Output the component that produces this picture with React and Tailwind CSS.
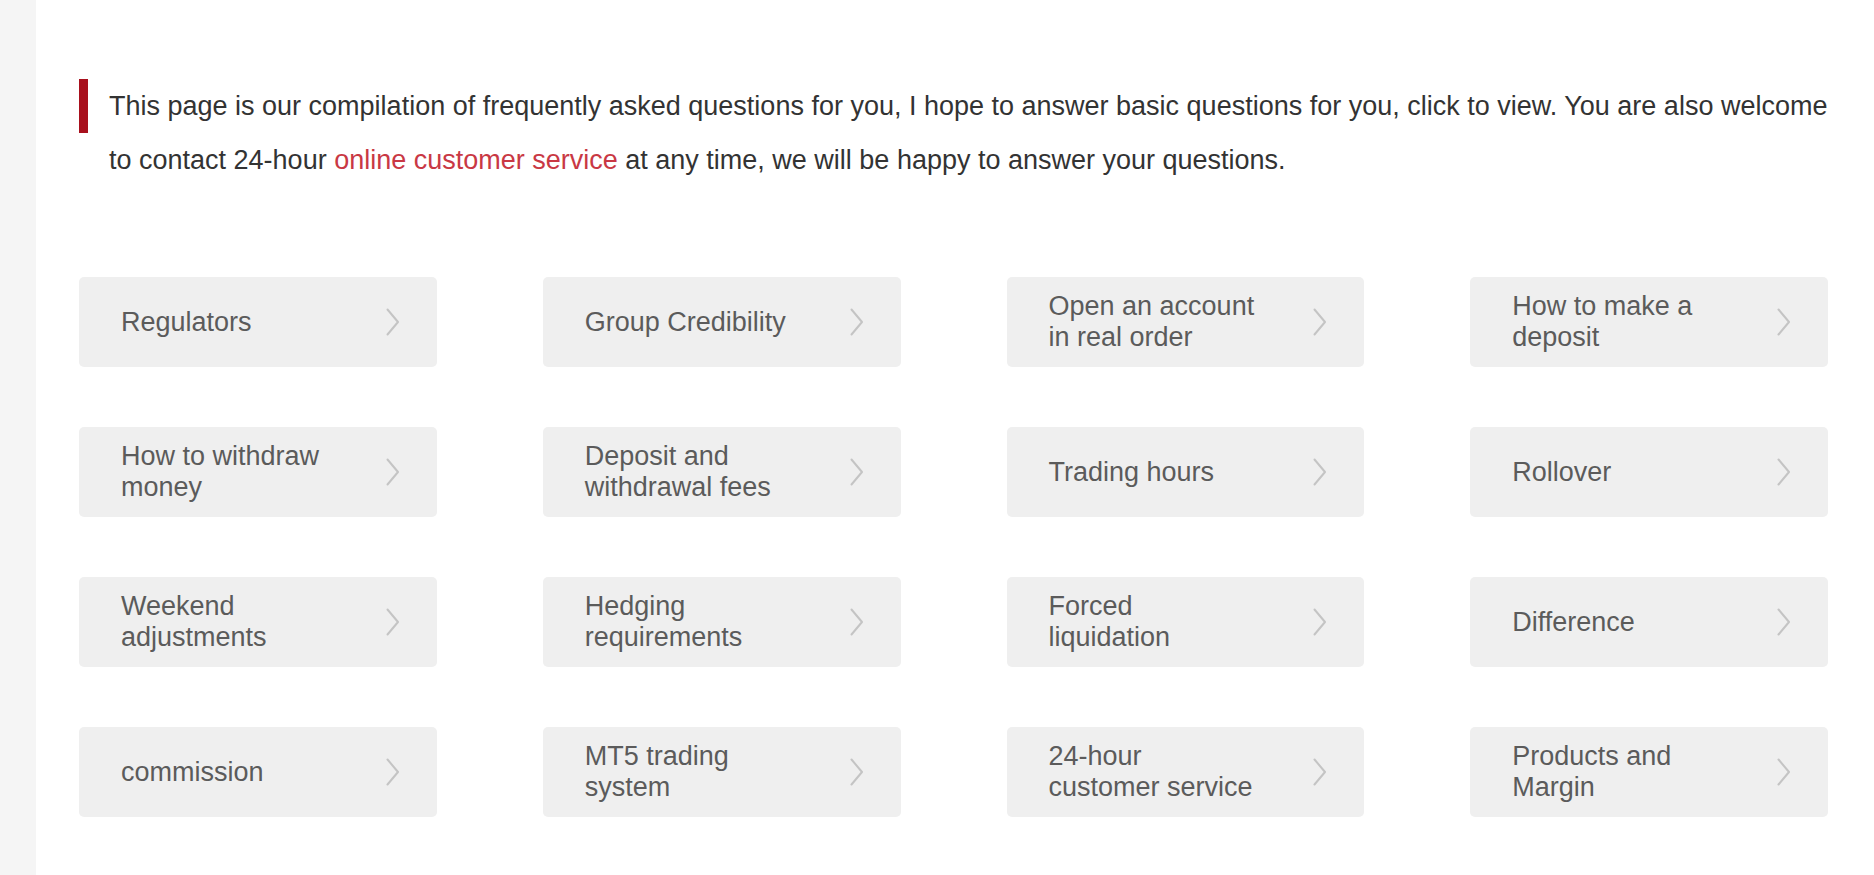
import React from 'react';

const topics = [
  'Regulators',
  'Group Credibility',
  'Open an account in real order',
  'How to make a deposit',
  'How to withdraw money',
  'Deposit and withdrawal fees',
  'Trading hours',
  'Rollover',
  'Weekend adjustments',
  'Hedging requirements',
  'Forced liquidation',
  'Difference',
  'commission',
  'MT5 trading system',
  '24-hour customer service',
  'Products and Margin',
];

function Chevron() {
  return (
    <svg width="16" height="30" viewBox="0 0 16 30" fill="none" className="shrink-0">
      <path d="M2.5 2.5 L13 15 L2.5 27.5" stroke="#c4c4c4" strokeWidth="2" strokeLinecap="round" strokeLinejoin="round" />
    </svg>
  );
}

function TopicCard({ title }) {
  return (
    <a
      href="#"
      className="flex h-[90px] items-center justify-between rounded-[5px] bg-[#efefef] pl-[42px] pr-[36px]"
    >
      <span className="w-[209px] text-[27px] leading-[31px] text-[#5b5b5b]">{title}</span>
      <Chevron />
    </a>
  );
}

export default function App() {
  return (
    <div className="flex min-h-[875px] bg-white font-['Liberation_Sans',Arial,sans-serif]">
      <div className="w-[36px] shrink-0 bg-[#f5f5f5]" />
      <main className="flex-1 pl-[43px] pr-[46px] pt-[79px] pb-[59px]">
        <div className="flex items-start">
          <div className="h-[54px] w-[9px] shrink-0 bg-[#a8101d]" />
          <p className="ml-[21px] text-[27px] leading-[54px] text-[#333333]">
            This page is our compilation of frequently asked questions for you, I hope to answer basic
            questions for you, click to view. You are also welcome to contact 24-hour{' '}
            <a href="#" className="text-[#c93844]">online customer service</a> at any time, we will be
            happy to answer your questions.
          </p>
        </div>

        <div className="mt-[90px] grid grid-cols-4 gap-x-[106px] gap-y-[60px]">
          {topics.map((t) => (
            <TopicCard key={t} title={t} />
          ))}
        </div>
      </main>
    </div>
  );
}
